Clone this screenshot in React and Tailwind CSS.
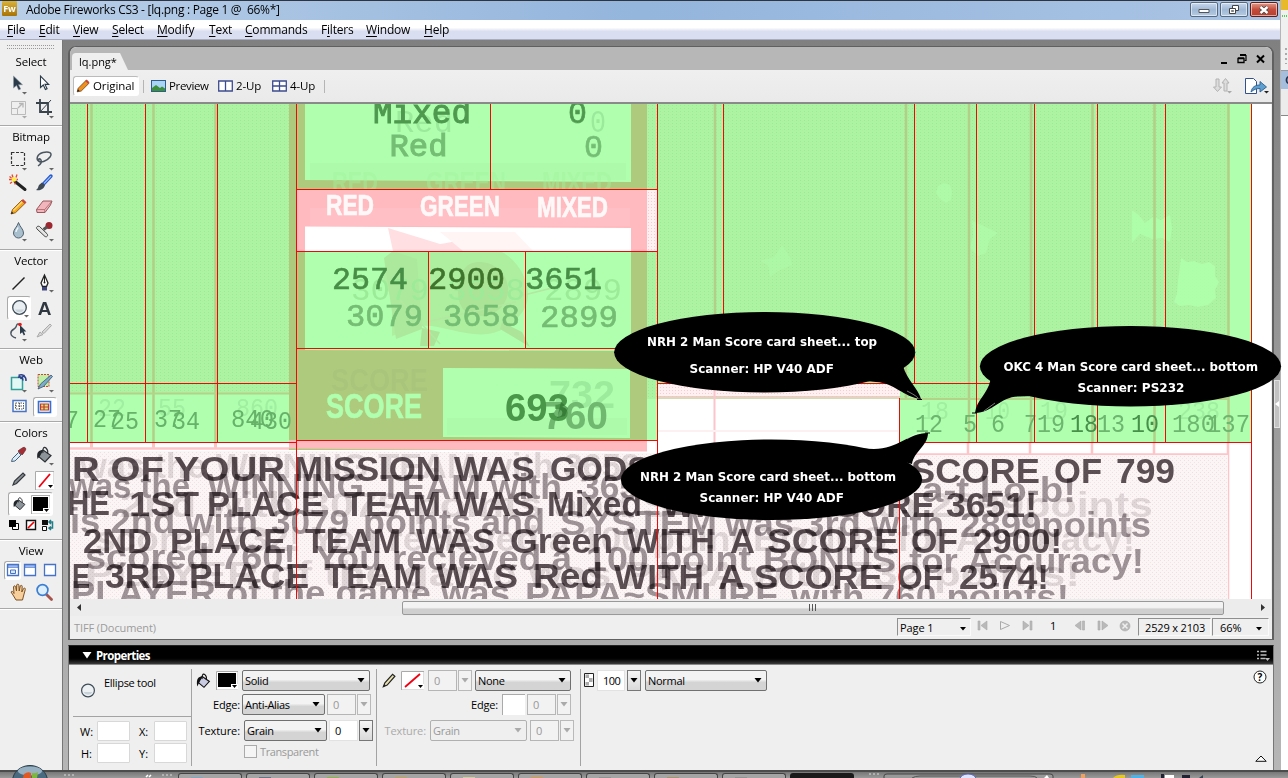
import React from "react";

const UI = "font-['Open_Sans','Noto_Sans',sans-serif]";

/* ---------- small shared pieces ---------- */

function Svg({ w = 18, h = 18, children, className = "" }) {
  return (
    <svg width={w} height={h} viewBox={`0 0 ${w} ${h}`} className={"block shrink-0 " + className} fill="none">
      {children}
    </svg>
  );
}

const Caret = ({ x = 14, y = 16, c = "#666" }) => <path d={`M${x} ${y}h5l-2.5 2.6z`} fill={c} />;

/* ---------- tool icons (22 x 22) ---------- */

const icons = {
  pointer: (
    <Svg w={22} h={22}>
      <path d="M5.500 2v12l3-2.600 2.200 4.600 2-1-2.200-4.300h4z" fill="#2b3a48" stroke="#8b98a4" strokeWidth=".6" />
      <Caret x={14} y={18} />
    </Svg>
  ),
  subselect: (
    <Svg w={22} h={22}>
      <path d="M6.500 2v11.500l2.800-2.500 2.100 4.500 1.700-.8-2.100-4.300h3.700z" fill="#fff" stroke="#2b3a48" strokeWidth="1.100" />
    </Svg>
  ),
  scale: (
    <Svg w={22} h={22}>
      <path d="M3.500 3.500h14v13h-14z M3.500 10.500h6v6" stroke="#bbb" />
      <path d="M10 10l4-4M11 5.500h4v4" stroke="#b5b5b5" strokeWidth="1.300" />
      <Caret x={14} y={18} c="#aaa" />
    </Svg>
  ),
  crop: (
    <Svg w={22} h={22}>
      <path d="M6 1v13h12M2 5h12v12" stroke="#39434c" strokeWidth="1.800" />
      <path d="M6 14L17 2" stroke="#39434c" />
      <Caret x={15} y={18} />
    </Svg>
  ),
  marquee: (
    <Svg w={22} h={22}>
      <path d="M3.500 3.500h13v13h-13z" stroke="#333" strokeWidth="1.200" strokeDasharray="3 1.500" />
      <Caret x={14} y={19} />
    </Svg>
  ),
  lasso: (
    <Svg w={22} h={22}>
      <path d="M6 13C1 11 3 5 9 3.500S19 4 16 8s-9 6-11 4 1-3 2-1 0 4-3 6" stroke="#4a5560" strokeWidth="1.500" />
      <Caret x={15} y={19} />
    </Svg>
  ),
  wand: (
    <Svg w={22} h={22}>
      <path d="M7 8.500l10 8" stroke="#222" strokeWidth="3" strokeLinecap="round" />
      <path d="M1 6.500h3M4 1.500l1 3M9 1.500L8 4.500M2 10.500l2-1.500M7 11.500v-2M1.500 3.500l2 1.500M10 6.500H8.500" stroke="#e8462a" strokeWidth="1.300" />
      <circle cx="6" cy="6.500" r="2.300" fill="#ffec3d" />
    </Svg>
  ),
  brush: (
    <Svg w={22} h={22}>
      <path d="M9 11.500L17 3" stroke="#2657c8" strokeWidth="3.400" strokeLinecap="round" />
      <path d="M10 10.500L17 3.200" stroke="#9cc0ff" strokeWidth="1.200" />
      <path d="M8 9.500l3 3-1.500 2.500C7 17.500 4 17.500 2 17c2-1 2-3 3-5z" fill="#3f4a55" />
    </Svg>
  ),
  pencil: (
    <Svg w={22} h={22}>
      <path d="M3 17l1.500-4.500L14 3l3.200 3.200-9.700 9.500z" fill="#f4a81c" stroke="#7a4a12" strokeWidth=".8" />
      <path d="M5.500 13.500L15 4" stroke="#ffd97c" strokeWidth="1.200" />
      <path d="M13.300 3.700L15 2l3.500 3.300-1.700 1.700z" fill="#c5483a" />
      <path d="M3 17l.8-2.400 1.700 1.600z" fill="#222" />
    </Svg>
  ),
  eraser: (
    <Svg w={22} h={22}>
      <path d="M2.500 12.500L9 4h9l-1.500 4-5.500 7.500H3z" fill="#f2b5bb" stroke="#8d4a50" strokeWidth=".9" />
      <path d="M2.500 12.500h8.200L18 4M10.700 12.500v3" stroke="#a8646a" strokeWidth=".8" />
    </Svg>
  ),
  drop: (
    <Svg w={22} h={22}>
      <path d="M10.500 1.500c1 4 5 6.500 5 10.500a5 5 0 0 1-10 0c0-4 4-6.500 5-10.500z" fill="#a9bfce" stroke="#4f606e" />
      <path d="M8 11c0-2 1.500-3 2-4.500" stroke="#eef6fb" strokeWidth="1.500" />
      <Caret x={14} y={18} />
    </Svg>
  ),
  stamp: (
    <Svg w={22} h={22}>
      <circle cx="15" cy="4.500" r="3.500" fill="#9c2730" />
      <path d="M9.500 8.500l3.500-2.500" stroke="#555" strokeWidth="3" />
      <path d="M3 8l8 7.500c2 1 3.500-1 2-2.800L5.500 5.500C3.500 4.500 1.500 6.500 3 8z" fill="#e4e4e4" stroke="#444" strokeWidth="1" />
      <Caret x={15} y={18} />
    </Svg>
  ),
  line: (
    <Svg w={22} h={22}>
      <path d="M4.500 16.500L16.500 4.500" stroke="#222" strokeWidth="1.500" />
    </Svg>
  ),
  pen: (
    <Svg w={22} h={22}>
      <path d="M10.500 2L7 10l1.500 3.500h4L14 10z" fill="#fff" stroke="#222" strokeWidth="1.300" />
      <path d="M10.500 2v7" stroke="#222" />
      <circle cx="10.500" cy="9.500" r="1" fill="#222" />
      <path d="M8 14h5v3.500H8z" fill="#3f467c" />
      <Caret x={15} y={17} />
    </Svg>
  ),
  ellipse: (
    <Svg w={22} h={22}>
      <circle cx="11.500" cy="10.500" r="6.800" fill="#e8eef2" stroke="#3f4d58" strokeWidth="1.300" />
      <path d="M7 12.500a5 5 0 0 0 9 0z" fill="#c9d3da" />
      <Caret x={16} y={18} />
    </Svg>
  ),
  freeform: (
    <Svg w={22} h={22}>
      <path d="M8 17C1 15 2 10 6 8S7 1.500 12 3.500" stroke="#4a5560" strokeWidth="1.400" />
      <path d="M12 4v9l2.200-1.800 1.600 3.200 1.400-.8-1.500-3h2.700z" fill="#2b3a48" />
      <circle cx="12" cy="3.500" r="1.800" fill="#e02020" />
      <Caret x={14} y={18} />
    </Svg>
  ),
  knife: (
    <Svg w={22} h={22}>
      <path d="M3 16l3-5 3 2.500zM8 11L16 3l1.500 1.500L10 12.500z" fill="#d8d8d8" stroke="#aaa" />
    </Svg>
  ),
  hotspot: (
    <Svg w={22} h={22}>
      <path d="M3.500 5.500h11v12h-11z" fill="#e2f8f4" stroke="#2ea19a" strokeWidth="1.500" />
      <path d="M10.500 3.500c4-2 8 1 7.500 5.500M12.500 7l4-4M10 5.500c2-1.500 5 0 5 3" stroke="#2c3f8a" strokeWidth="1.500" />
      <Caret x={14} y={18} />
    </Svg>
  ),
  slice: (
    <Svg w={22} h={22}>
      <path d="M4 2.500h11v12H4z" fill="#bff0a5" stroke="#cc4438" strokeDasharray="2 1" />
      <path d="M4 17l2.500-5L17 3l1.500 1.500-9 10z" fill="#7fa9c9" stroke="#33566f" strokeWidth=".8" />
      <Caret x={15} y={18} />
    </Svg>
  ),
  hideSlice: (
    <Svg w={22} h={22}>
      <path d="M5 4.500h13v11H5z" fill="#fff" stroke="#4a74c4" strokeWidth="1.500" />
      <path d="M7.500 7h8v6h-8zM7.500 10h8M11.500 7v6" stroke="#555" strokeDasharray="1.500 1" />
    </Svg>
  ),
  showSlice: (
    <Svg w={22} h={22}>
      <path d="M4.500 5.500h12v11h-12z" fill="#fff" stroke="#3570d4" strokeWidth="1.600" />
      <path d="M6.500 8h8v6h-8z" fill="#c5e88d" stroke="#d33220" strokeWidth="1.200" />
      <path d="M6.500 11h8M10 8v6" stroke="#d33220" strokeWidth="1.200" />
    </Svg>
  ),
  dropper: (
    <Svg w={22} h={22}>
      <path d="M3.500 16.500l1-3 6-6 2.500 2.500-6 6z" fill="#d9ecf8" stroke="#45637c" />
      <path d="M10 6l1.500-1.300L15 2.500c2-.8 3.500 1 2.500 2.800L15 9l-1 1z" fill="#a42e34" stroke="#5e2227" strokeWidth=".6" />
    </Svg>
  ),
  bucket: (
    <Svg w={22} h={22}>
      <path d="M9 5l8 5.500-6 6.500-6.500-5.500z" fill="#8e959a" stroke="#2c3135" strokeWidth="1.200" />
      <path d="M9 8c-1-4 1-7 3-5s2 4 1.500 5.500" stroke="#2c3135" strokeWidth="1.200" />
      <path d="M9 5c-4 0-7 2-5.500 9l2.500-3z" fill="#22272b" />
      <Caret x={15} y={18} />
    </Svg>
  ),
  smallPencil: (
    <Svg w={22} h={22}>
      <path d="M5 16l1.500-4L15 4l2 2-8.500 8.500z" fill="#8b9096" stroke="#33383d" strokeWidth="1.200" />
    </Svg>
  ),
  hand: (
    <Svg w={22} h={22}>
      <path d="M8 19L5 14l-2-3c1-1.500 2-.5 3 1.500L5.500 6c.5-1.800 2-1.500 2.200.3L8.500 10l.2-6c.8-1.500 2-1 2.200.3L11.200 10l1-5c1-1.300 2.200-.6 2 .8L13.800 11l1.800-3.500c1-.9 2-.2 1.700 1L15.500 15l-1 4z" fill="#f7cf9c" stroke="#7c5124" />
    </Svg>
  ),
  zoom: (
    <Svg w={22} h={22}>
      <path d="M12.500 13.500l5 5" stroke="#a6544b" strokeWidth="2.800" strokeLinecap="round" />
      <circle cx="8.500" cy="9" r="5.400" fill="#dcefff" stroke="#3c7ed1" strokeWidth="1.700" />
    </Svg>
  ),
};

function ScreenIcon({ kind }) {
  return (
    <Svg w={18} h={18}>
      <path d="M3.500 3.500h11v11h-11z" fill="#fff" stroke="#4672c8" strokeWidth="1.300" />
      {kind !== "full" && <path d="M4 4h10v2.500H4z" fill="#9db9ee" stroke="#4672c8" strokeWidth=".6" />}
      {kind === "std" && <path d="M6.500 9h5v3.500h-5z" fill="#dbe6fb" stroke="#4672c8" />}
    </Svg>
  );
}

function Swatch({ color, none, w = 19 }) {
  return (
    <Svg w={w} h={19}>
      <path d={`M0 0h${w}v19H0z`} fill="#fff" />
      <path d={`M.5 19V.5H${w}`} stroke="#aaa" />
      <path d={`M${w - 0.5} 1v17.500H1`} stroke="#ddd" />
      {none ? <path d={`M4 16L${w - 4} 3`} stroke="#f00010" strokeWidth="1.800" /> : <path d={`M2 2h${w - 4}v14H2z`} fill={color} />}
      <path d={`M${w - 7} 13h7v5h-7z`} fill="#fff" />
      <path d={`M${w - 6} 14h5l-2.500 3z`} fill="#000" />
    </Svg>
  );
}

/* ---------- left tool palette ---------- */

function Section({ title, className, children }) {
  return (
    <div className={"flex flex-col border-b border-[#a9a9a9] shadow-[0_1px_0_#fff] " + className}>
      <div className="flex h-[22px] shrink-0 items-center justify-center text-[11.5px] leading-none tracking-[-0.15px] text-black">{title}</div>
      {children}
    </div>
  );
}

const Row = ({ a, b, h = "h-6" }) => (
  <div className={"flex shrink-0 items-center gap-[3px] pl-[7px] " + h}>
    <div className="flex w-[23px] justify-center">{a}</div>
    <div className="flex w-[23px] justify-center">{b}</div>
  </div>
);

const Sel = ({ children }) => <div className="rounded-[3px] border border-[#aaa] border-r-white border-b-white bg-white">{children}</div>;

function Tools() {
  return (
    <div className="flex w-[63px] shrink-0 flex-col border-r border-[#777] bg-[#efefef]">
      <div className="flex h-[11px] shrink-0 items-end pl-[7px]">
        <Svg w={48} h={6}>
          <path d="M0 .5h48M0 3.500h48" stroke="#999" strokeDasharray="1 1" />
        </Svg>
      </div>
      <Section title="Select" className="h-[75px]">
        <Row a={icons.pointer} b={icons.subselect} />
        <Row a={icons.scale} b={icons.crop} />
      </Section>
      <Section title="Bitmap" className="h-[124px]">
        <Row a={icons.marquee} b={icons.lasso} />
        <Row a={icons.wand} b={icons.brush} />
        <Row a={icons.pencil} b={icons.eraser} />
        <Row a={icons.drop} b={icons.stamp} />
      </Section>
      <Section title="Vector" className="h-[99px]">
        <Row a={icons.line} b={icons.pen} />
        <Row a={<Sel>{icons.ellipse}</Sel>} b={<span className="font-['Liberation_Sans',sans-serif] text-[19px] leading-none font-bold text-[#2f3840]">A</span>} />
        <Row a={icons.freeform} b={icons.knife} />
      </Section>
      <Section title="Web" className="h-[73px]">
        <Row a={icons.hotspot} b={icons.slice} />
        <Row a={icons.hideSlice} b={<Sel><div className="-my-0.5">{icons.showSlice}</div></Sel>} />
      </Section>
      <Section title="Colors" className="h-[118px]">
        <Row a={icons.dropper} b={icons.bucket} />
        <Row a={icons.smallPencil} b={<Swatch none />} />
        <div className="flex h-6 shrink-0 items-center pl-2">
          <div className="flex h-6 w-[45px] items-center rounded-[3px] border border-[#aaa] border-r-white border-b-white bg-white">
            <svg width="22" height="18" viewBox="0 0 22 22">
              <path d="M9 6l8 5.500-6 6.500-6.500-5.500z" fill="#8e959a" stroke="#2c3135" strokeWidth="1.200" />
              <path d="M9 9c-1-4 1-7 3-5s2 4 1.500 5.500" stroke="#2c3135" strokeWidth="1.200" fill="none" />
              <path d="M9 6c-4 0-7 2-5.500 9l2.500-3z" fill="#22272b" />
            </svg>
            <Swatch color="#000" />
          </div>
        </div>
        <div className="flex h-[17px] shrink-0 items-center gap-[5px] pl-2">
          <Svg w={12} h={12}>
            <path d="M4.500 4.500h6v6h-6z" fill="#fff" stroke="#000" />
            <path d="M1 1h7v7H1z" fill="#000" />
          </Svg>
          <Svg w={12} h={12}>
            <path d="M1.500 1.500h9v9h-9z" fill="#fff" stroke="#111" strokeWidth="1.400" />
            <path d="M3 9l6-6" stroke="#e00" strokeWidth="1.700" />
          </Svg>
          <Svg w={13} h={12}>
            <path d="M0 1h6v5H0z" fill="#111" />
            <path d="M.5 7.500h4v4h-4z" fill="#fff" stroke="#111" />
            <path d="M7.500 3h3v6H8M9 1L7 3l2 2M9 7.500L7 9l2 2" stroke="#227d86" strokeWidth="1.500" />
          </Svg>
        </div>
      </Section>
      <Section title="View" className="h-[69px]">
        <div className="flex h-4 shrink-0 items-center pl-1">
          <div className="-my-0.5 flex h-[19px] w-[17px] items-center justify-center rounded-[3px] border border-[#aaa] border-r-white border-b-white bg-white">
            <ScreenIcon kind="std" />
          </div>
          <ScreenIcon kind="menu" />
          <div className="pl-0.5">
            <ScreenIcon kind="full" />
          </div>
        </div>
        <Row a={icons.hand} b={icons.zoom} h="h-7" />
      </Section>
    </div>
  );
}

/* ---------- title and menu bars ---------- */

function WinButton({ red, children }) {
  return (
    <div
      className={
        "flex h-[15px] w-7 items-center justify-center rounded-[2px] border shadow-[inset_0_0_0_1px_rgba(255,255,255,.55)] " +
        (red ? "border-[#5a1f1c] bg-linear-to-b from-[#dd9a8c] via-[#c34c3c] to-[#b8402c]" : "border-[#56697f] bg-linear-to-b from-[#c9d9ec] via-[#a0b8d5] to-[#b4cae4]")
      }
    >
      {children}
    </div>
  );
}

function TitleBar() {
  return (
    <div className="flex h-5 shrink-0 items-start border-t border-[#2e3440] bg-linear-to-r from-[#b9cfe8] via-[#94b5dc] to-[#aac4e4] pl-[2px]">
      <div className="flex h-[15px] w-[15px] items-center justify-center rounded-[1px] bg-linear-to-b from-[#d9b23a] to-[#a87400] text-[9px] leading-none font-bold text-white">Fw</div>
      <div className="pt-[2px] pl-[9px] text-[12px] leading-[14px] tracking-[-0.29px] whitespace-pre text-black">Adobe Fireworks CS3 - [lq.png : Page 1 @  66%*]</div>
      <div className="ml-auto flex gap-[2px] pt-px pr-[2px]">
        <WinButton>
          <Svg w={12} h={8}><path d="M1 3.500h10v3H1z" fill="#fff" stroke="#555" /></Svg>
        </WinButton>
        <WinButton>
          <Svg w={12} h={11}>
            <path d="M4.500 1.500h6v5h-6z" fill="#fff" stroke="#444" />
            <path d="M1.500 4.500h6v5h-6z" fill="#fff" stroke="#444" />
            <path d="M3.500 6.500h2v1h-2z" fill="#9ab" stroke="#444" strokeWidth=".6" />
          </Svg>
        </WinButton>
        <WinButton red>
          <Svg w={12} h={10}>
            <path d="M2.500 2l7 6M9.500 2l-7 6" stroke="#444" strokeWidth="4" />
            <path d="M2.500 2l7 6M9.500 2l-7 6" stroke="#fff" strokeWidth="2.400" />
          </Svg>
        </WinButton>
      </div>
    </div>
  );
}

const menus = [
  ["File", 0, "w-[32px]"],
  ["Edit", 0, "w-[34px]"],
  ["View", 0, "w-[39px]"],
  ["Select", 0, "w-[45px]"],
  ["Modify", 0, "w-[52px]"],
  ["Text", 0, "w-[36px]"],
  ["Commands", 0, "w-[76px]"],
  ["Filters", 1, "w-[45px]"],
  ["Window", 0, "w-[58px]"],
  ["Help", 0, "w-[40px]"],
];

function MenuBar() {
  return (
    <div className="flex h-5 shrink-0 items-center border-b border-[#a8aec0] bg-linear-to-b from-white from-40% to-[#d9def0] to-60% pl-[7px] text-[12px] leading-none tracking-[-0.2px] text-black">
      {menus.map(([m, i, w]) => (
        <div key={m} className={"shrink-0 pt-px " + w}>
          {m.slice(0, i)}
          <span className="underline underline-offset-2">{m[i]}</span>
          {m.slice(i + 1)}
        </div>
      ))}
    </div>
  );
}

/* ---------- document window ---------- */

function DocTabs() {
  return (
    <div className="flex h-[23px] shrink-0 items-end rounded-t-[7px] bg-[#b7b7b7] pl-[2px]">
      <div className="flex h-[17px] w-[56px] items-center rounded-tl-[4px] bg-[#efefef] pl-[7px] text-[11px] leading-none text-black [clip-path:polygon(0_0,48px_0,100%_100%,0_100%)]">lq.png*</div>
      <div className="ml-auto flex gap-[9px] self-center pr-[7px]">
        <Svg w={8} h={12}><path d="M1 9h6v2H1z" fill="#000" /></Svg>
        <Svg w={10} h={12}>
          <path d="M3 2.500h6v5H7.500M3 1.500h6" stroke="#000" strokeWidth="1.200" />
          <path d="M1 5.500h6v4H1zM1 5h6" stroke="#000" strokeWidth="1.300" />
        </Svg>
        <Svg w={9} h={12}><path d="M1 2.500l7 7M8 2.500l-7 7" stroke="#000" strokeWidth="2" /></Svg>
      </div>
    </div>
  );
}

const Sep = ({ className = "" }) => <div className={"h-[13px] w-px bg-[#b5b5b5] " + className} />;

function DocToolbar() {
  return (
    <div className="flex h-[32px] shrink-0 items-center bg-linear-to-b from-[#efefef] to-[#eaeaea] pl-[3px] text-[11.500px] leading-none text-black">
      <div className="flex h-5 w-[66px] items-center rounded-[3px] border border-[#bbb] border-r-white border-b-white bg-white pl-[1px]">
        <svg width="16" height="16" viewBox="0 0 22 22">
          <path d="M3 19l1.500-5L15 3.500l4 4L8.500 18z" fill="#ef8f1c" stroke="#5d3312" />
          <path d="M14 4l2-2 4 4-2 2z" fill="#c5483a" />
          <path d="M3 19l1-3.500 2.500 2.500z" fill="#222" />
        </svg>
        <span className="pl-[2px] tracking-[-0.1px]">Original</span>
      </div>
      <Sep className="mr-[7px] ml-[4px]" />
      <Svg w={15} h={12}>
        <path d="M0 0h15v12H0z" fill="#2e5f8c" />
        <path d="M1 1h13v10H1z" fill="#a9d4f4" />
        <path d="M1 8l4-3 4 3 2-1.500 3 2V11H1z" fill="#3d8f3a" />
      </Svg>
      <span className="w-[52px] pl-[3px] tracking-[-0.35px]">Preview</span>
      <Svg w={15} h={12}>
        <path d="M.7 1h13.600v10H.7zM7.500 1v10" fill="#fff" stroke="#3d4c8f" strokeWidth="1.300" />
      </Svg>
      <span className="w-[39px] pl-[3px] tracking-[-0.1px]">2-Up</span>
      <Svg w={15} h={12}>
        <path d="M.7 1h13.600v10H.7zM7.500 1v10M1 6h13" fill="#fff" stroke="#3d4c8f" strokeWidth="1.300" />
      </Svg>
      <span className="w-[37px] pl-[3px] tracking-[-0.1px]">4-Up</span>
      <Sep />
      <Svg w={21} h={18} className="ml-auto">
        <path d="M5 2h3v8h2.500l-4 4.500-4-4.500H5zM13 14h3V6h2l-3.500-4.500L11 6h2z" fill="#ddd" stroke="#b2b2b2" />
        <Caret x={16} y={14} c="#aaa" />
      </Svg>
      <Svg w={25} h={18} className="mr-[3px] ml-[12px]">
        <path d="M1.500 1.500h8l3 3v12h-11z" fill="#fff" stroke="#33518c" />
        <path d="M7 15c1-5 4-7 9-7V4.500l6.500 5.500-6.500 5v-3.500c-4 0-6 1-9 3.500z" fill="#5e9fd1" stroke="#2d5e8b" strokeWidth=".9" />
        <Caret x={20} y={14} c="#222" />
      </Svg>
    </div>
  );
}

const MONO = "'Liberation Mono', monospace";
const SANS = "'Liberation Sans', sans-serif";

/* [text, x, baseline, width] */
const darkWords = [
  ["R OF YOUR", 72, 480.7, 213], ["MISSION", 294, 480.7, 147], ["WAS", 454, 480.7, 81], ["GODS", 550, 481, 100],
  ["SCORE", 911, 482.500, 129], ["OF", 1054, 482.500, 48], ["799", 1116, 483, 59],
  ["HE", 67, 515, 43], ["1ST", 129, 515.500, 70], ["PLACE", 207, 515.700, 117], ["TEAM", 344, 516, 97], ["WAS", 454, 516, 81],
  ["Mixed", 547, 516.300, 95], ["WITH", 662, 516.500, 90], ["SCORE", 810, 516.700, 125], ["3651!", 946, 516.700, 91],
  ["2ND", 83, 552.700, 69], ["PLACE", 170, 552.700, 116], ["TEAM", 305, 552.700, 96], ["WAS", 416, 552.700, 79],
  ["Green", 510, 553, 103], ["WITH", 627, 553, 88], ["A", 730, 553, 25], ["SCORE", 767, 553.200, 132], ["OF", 911, 553.200, 47], ["2900!", 973, 553.300, 89],
  ["E", 72, 587.700, 18], ["3RD", 105, 587.700, 71], ["PLACE", 189, 587.700, 120], ["TEAM", 325, 588, 97], ["WAS", 436, 588, 82],
  ["Red", 533, 588.300, 70], ["WITH", 614, 588.500, 90], ["A", 718, 588.700, 27], ["SCORE", 754, 588.900, 129], ["OF", 897, 589, 46], ["2574!", 959, 589, 90],
];

const grayWords = [
  ["was the", 69, 497.500, 121], ["WINNING", 207, 498, 157], ["TEAM with", 380, 498.500, 182], ["3651 p", 580, 499, 110], ["a-t l-o-b!", 922, 501.700, 154],
  ["is 2nd with", 70, 532.500, 188], ["3079", 271, 533.500, 78], ["points and", 363, 534, 182], ["SYSTEM", 560, 535, 157], ["was 3rd with", 725, 536, 219], ["2899points", 960, 537, 191],
  ["scored 760!", 85, 569, 211], ["You recieved a", 315, 570, 257], ["100 point", 586, 571, 165], ["BONUS", 763, 571.800, 133], ["for Accuracy!", 909, 572.700, 235],
  ["PLAYER of the game was", 71, 605, 439], ["PAPA~SMURF", 525, 607, 253], ["with 760 points!", 791, 608.500, 278],
];

const ghostWords = [
  ["was the WINNING TEAM with 3658", 80, 478, 560], ["2nd with 3079 points and SYSTEM with 2899points", 120, 517, 1033],
  ["scored 732! You recieved a 100 point BONUS for Accuracy!", 95, 551, 1040], ["PLAYER of the game was PAPA with 732 points!", 85, 586, 995],
];

function Words({ list, fill, opacity = 1 }) {
  return (
    <g fill={fill} opacity={opacity} fontFamily={SANS} fontWeight="700" fontSize="35" className="mix-blend-multiply">
      {list.map(([t, x, y, w], i) => (
        <text key={i} x={x} y={y} textLength={w} lengthAdjust="spacingAndGlyphs">{t}</text>
      ))}
    </g>
  );
}

function Nums({ list, size, fill, family = MONO, weight = 400, edge = 0 }) {
  return (
    <g fill={fill} fontFamily={family} fontSize={size} fontWeight={weight} stroke={edge ? fill : "none"} strokeWidth={edge}>
      {list.map(([t, x, y, w], i) => (
        <text key={i} x={x} y={y} textLength={w} lengthAdjust="spacingAndGlyphs">{t}</text>
      ))}
    </g>
  );
}

function ScoreCard() {
  return (
    <svg width="1201" height="495" viewBox="70 104 1201 495" className="block shrink-0">
      <defs>
        <pattern id="grain" width="4" height="3" patternUnits="userSpaceOnUse">
          <rect width="4" height="3" fill="#acf3a2" />
          <rect x="0" y="0" width="1" height="1" fill="#a2e697" />
          <rect x="2" y="1" width="1" height="1" fill="#b0ee9f" />
        </pattern>
        <pattern id="rose" width="4" height="4" patternUnits="userSpaceOnUse">
          <rect width="4" height="4" fill="#fcf5f6" />
          <rect width="1" height="1" fill="#f0dfe1" />
          <rect x="2" y="2" width="1" height="1" fill="#f2e4e6" />
        </pattern>
        <pattern id="rose2" width="3" height="3" patternUnits="userSpaceOnUse">
          <rect width="3" height="3" fill="#fff0f1" />
          <rect width="1" height="1" fill="#ffc8cc" />
        </pattern>
      </defs>
      <path d="M70 103h1201v496H70z" fill="#fff" />

      {/* tinted capture areas */}
      <path d="M70 103h1159v296H70z" fill="url(#grain)" />
      <path d="M1229 103h23v296h-23z" fill="#afffaf" />
      <path d="M70 394h219v48H70z" fill="#afffaf" />
      <path d="M900 399h352v43H900z" fill="#afffaf" />
      <g fill="#afffab">
        <path d="M1132 210l7 5 6 8 8-6 8 3 9-5 2 13-2 14-8-4-10 1-12-5-8 9z" opacity=".8" />
        <path d="M1181 258l6 4 7-1 8 3 7-2 6 4 0 10 4 6-4 8 1 8-8 7-10 2-9-2-9 1-6-4 3-9 1-12z" opacity=".85" />
        <path d="M938 186l6-3 6 2 2 7-1 8-5 3-6-4-4-6z" opacity=".6" />
        <path d="M972 221l12 5 14 7-8 6-4 14-8 3-8-8 3-13z" opacity=".6" />
        <path d="M760 261l14-4 8-12 8 12 2 8-14 6-8 6-2-12z" opacity=".45" />
      </g>

      {/* printed column rules */}
      <path
        d="M91.500 103v344M153.500 103v344M215.500 103v344M715 103v281M906 103v296M969 103v340M1031 103v340M1092.500 103v340M1154.500 103v340M1228.500 103v340"
        stroke="#b1cf86" strokeWidth="2.500"
      />
      <path d="M70 393.500h219M900 399h328" stroke="#b3d389" strokeWidth="2" />
      <path d="M70 448.500h219M904 454.500h324M968 443v12M1030 443v12M1092 443v12M1154 443v12M1228 443v156M91.500 443v5M153.500 443v5M215.500 443v5" stroke="#ffc4c8" strokeWidth="2.500" />

      {/* blank block */}
      <path d="M658 384h242v12H658z" fill="url(#rose2)" />
      <path d="M647 399h11v53h-11zM658 399h242v56H658z" fill="#fff" />
      <path d="M647 399h10v41h-10z" fill="#afffaf" />
      <path d="M658 397.500h242M714.500 384v66" stroke="#fbc6cb" strokeWidth="2" />
      <path d="M658 431h240" stroke="#fdf0f1" strokeWidth="2" />

      {/* team panel */}
      <path d="M289 103h358v347H289z" fill="#aecb7d" />
      <path d="M305 103h326v79l-326-2z" fill="#afffaf" />
      <path d="M310 163h316v17H310z" fill="#acfaaa" />
      <path d="M296 190h351v61H296z" fill="#ffbabf" />
      <path d="M647 190h10v61h-10z" fill="url(#rose2)" />
      <path d="M310 208h320v18H310z" fill="#fff" opacity=".08" />
      <path d="M305 226.500l326 1.500v23H305z" fill="#fff" />
      <path d="M388 228l52 16c20-2 40-14 60-3l9 10H393z" fill="#ffdfe2" />
      <path d="M440 232h75l18 19h-70z" fill="#fff5f5" />
      <path d="M305 251h326v100l-326-1z" fill="#afffaf" />
      <path d="M393 251h107c20 10 28 30 28 45s-18 35-40 38-50-10-66-8-18 6-30 10V300l-9-22z" fill="#aeef9f" />
      <path d="M384 258l9-7 24 8 5 70-26 10z" fill="#ace99d" />
      <path d="M470 264c20-8 40 10 38 28s-20 28-38 22-14-44 0-50z" fill="#abe497" />
      <path d="M502 322l20 10 8 15-30-18zM422 328l18 4-6 14h-14z" fill="#ace59a" />
      <path d="M520 296l32-8M426 322l90-20M400 300l40 44" stroke="#b2e8a0" strokeWidth="1.500" />
      <path d="M289 440h358v11.500l-358-3z" fill="#ffbabf" />
      <path d="M443 368l187 1v69l-187-1z" fill="#afffaf" />
      <path d="M447 418h180v17H447z" fill="#acfaaa" />

      {/* narrative text area */}
      <path d="M70 451l219 0 358 2 257 2h324v144H70z" fill="url(#rose)" />
      <Words list={ghostWords} fill="#b9b2b5" opacity={0.42} />
      <Words list={grayWords} fill="#9b9497" opacity={0.95} />
      <Words list={darkWords} fill="#544a4e" opacity={0.95} />

      {/* panel lettering */}
      <Nums size={31} fill="#9bea9b" list={[["Red", 395, 132, 58], ["0", 590, 132, 16]]} />
      <Nums size={32.500} fill="#4e994e" edge={1} list={[["Mixed", 373, 122.600, 98]]} />
      <Nums size={31} fill="#74be74" edge={1} list={[["Red", 389.500, 156, 58]]} />
      <Nums size={31} fill="#4e994e" edge={0.6} list={[["0", 568, 122.600, 19]]} />
      <Nums size={31} fill="#74be74" edge={0.6} list={[["0", 584, 157, 19]]} />
      <g opacity=".4">
        <Nums size={29} family={SANS} weight={700} fill="#a4f3a0" list={[["RED", 332, 192, 46], ["GREEN", 426, 192, 80], ["MIXED", 542, 192, 70]]} />
      </g>
      <path d="M297 190h350v5H297z" fill="#ffbabf" />
      <Nums size={29} family={SANS} weight={700} fill="#fff8f8" edge={0.7} list={[["RED", 326, 215, 48], ["GREEN", 420, 216, 80], ["MIXED", 537, 217, 71]]} />
      <Nums size={32} fill="#9beb98" list={[["3079", 351, 300, 78], ["3658", 447, 300, 78], ["2899", 544, 300, 78]]} />
      <Nums size={31} fill="#488e46" edge={0.6} list={[["2574", 332, 289, 76], ["3651", 525, 289, 77]]} />
      <Nums size={31} fill="#3f742c" edge={0.6} list={[["2900", 428, 289, 77]]} />
      <Nums size={31} fill="#74bd73" edge={0.6} list={[["3079", 346, 325.500, 77], ["3658", 443, 325.500, 77], ["2899", 540, 326.500, 78]]} />
      <Nums size={31} family={SANS} weight={700} fill="#a9c57b" list={[["SCORE", 331, 391, 97]]} />
      <Nums size={35} family={SANS} weight={700} fill="#afffaf" edge={0.6} list={[["SCORE", 326, 417.500, 96]]} />
      <Nums size={38} family={SANS} weight={700} fill="#9ceb9c" list={[["732", 549, 407.500, 66]]} />
      <Nums size={38} family={SANS} weight={700} fill="#70b770" list={[["760", 543, 428.500, 65]]} />
      <Nums size={38} family={SANS} weight={700} fill="#4a974a" list={[["693", 505, 420.800, 64]]} />
      <path d="M561 402l7 6-3 8-8 2z" fill="#2c6a2c" opacity=".6" />

      {/* stroke results */}
      <Nums size={26} fill="#a0ee9f" list={[["22", 98, 416, 28], ["55", 158, 416, 28], ["860", 236, 416, 42], ["18", 921, 419, 28], ["10", 985, 419, 25], ["19", 1040, 419, 28], ["238", 1178, 419, 42]]} />
      <Nums size={26} fill="#66b268" list={[["7", 65, 428, 14], ["27", 93, 426.500, 28], ["25", 111, 429, 28], ["37", 154, 426.500, 28], ["34", 172, 429, 28], ["840", 231, 427, 43], ["430", 250, 429, 42]]} />
      <Nums size={26} fill="#6cb66e" list={[["12", 915, 431.700, 28], ["5", 963, 431.700, 14], ["6", 991, 431.700, 14], ["7", 1024, 431.700, 13], ["19", 1037, 431.700, 28], ["13", 1097, 431.700, 28], ["180", 1172, 431.700, 43], ["137", 1207, 431.700, 43]]} />
      <Nums size={26} fill="#46904a" list={[["18", 1070, 431.700, 28], ["10", 1131, 431.700, 28]]} />

      {/* slice guides */}
      <g fill="none" stroke="#f00808" strokeWidth="1" shapeRendering="crispEdges">
        <path d="M87.500 103v339M145.500 103v339M217.500 103v339M296.500 103v496M490.500 103v86M657.500 103v496M723.500 103v280M914.500 103v280M976.500 103v339M1034.500 103v339M1097.500 103v339M1165.500 103v339M1251.500 103v496M899.500 398v201M428.500 251v97M525.500 251v97" />
        <path d="M296 189.500h361M296 251.500h361M296 348.500h361M70 383.500h226M657 383.500h594M70 442.500h226M296 440.500h361M900 442.500h351" />
      </g>
    </svg>
  );
}

function Bubbles() {
  const f = { fill: "#fff", fontFamily: "'DejaVu Sans', sans-serif", fontWeight: 700, fontSize: 12.3 };
  const lines = [
    ["NRH 2 Man Score card sheet... top", 647, 346, 230],
    ["Scanner: HP V40 ADF", 689.500, 373, 144.500],
    ["OKC 4 Man Score card sheet... bottom", 1003.500, 371, 254.500],
    ["Scanner: PS232", 1077.500, 392, 107],
    ["NRH 2 Man Score card sheet... bottom", 640, 481, 256],
    ["Scanner: HP V40 ADF", 699.500, 502, 144.500],
  ];
  return (
    <svg width="1288" height="778" viewBox="0 0 1288 778" className="pointer-events-none absolute top-0 left-0">
      <ellipse cx="764.700" cy="352.300" rx="150.600" ry="40.300" />
      <path d="M903 366c4 14 15 22 18 33-18-2-26-16-45-17l-30-3z" />
      <ellipse cx="1130.500" cy="366.300" rx="150.600" ry="40.300" />
      <path d="M990.500 380c-3 14-14 20-15.500 33 17 0 25-16 43-16.500l30-1z" />
      <ellipse cx="771.500" cy="479.700" rx="150.600" ry="40.300" />
      <path d="M912 464c2-13 16-18 16-31-20 0-30 16-54 16l-26-1z" />
      <path d="M917 399.500h5M972 413h5M925 433h5" stroke="#000" strokeWidth="1" />
      <path d="M907 391c6 3 9 5 11 7M984 411l11-8M907 439c6-4 10-6 14-6" stroke="#fff" strokeWidth=".6" fill="none" opacity=".8" />
      {lines.map(([t, x, y, w], i) => (
        <text key={i} x={x} y={y} textLength={w} lengthAdjust="spacingAndGlyphs" {...f}>{t}</text>
      ))}
    </svg>
  );
}

function ScrollBar() {
  return (
    <div className="flex h-[17px] shrink-0 items-center bg-[#ececec] pr-[2px]">
      <Svg w={18} h={17}><path d="M11 5v7L7 8.500z" fill="#333" /></Svg>
      <div className="ml-[314px] flex h-[14px] w-[822px] items-center justify-center rounded-[2px] border border-[#999] bg-linear-to-b from-[#f3f3f3] from-45% to-[#cfcfcf] to-60%">
        <Svg w={10} h={8}><path d="M1.500 0v7M4.500 0v7M7.500 0v7" stroke="#555" /></Svg>
      </div>
      <Svg w={14} h={17} className="ml-auto"><path d="M5 5v7l4-3.500z" fill="#333" /></Svg>
    </div>
  );
}

function StatusBox({ w, children }) {
  return <div className={"flex h-[18px] shrink-0 items-center border border-[#8f8f8f] border-r-[#fafafa] border-b-[#fafafa] px-[2px] " + w}>{children}</div>;
}

function StatusBar() {
  const tri = <Svg w={6} h={4} className="mt-1 ml-auto"><path d="M0 0h6L3 3.500z" fill="#000" /></Svg>;
  return (
    <div className="flex h-[22px] shrink-0 items-center bg-[#efefef] pl-[4px] text-[11px] leading-none text-black">
      <span className="text-[11px] tracking-[-0.1px] text-[#9c9c9c]">TIFF (Document)</span>
      <div className="ml-auto flex items-center pr-[3px]">
        <StatusBox w="w-[74px]">
          <span className="tracking-[-0.1px]">Page 1</span>
          <div className="ml-auto pr-[2px]">{tri}</div>
        </StatusBox>
        <svg width="167" height="18" viewBox="971 618 167 18" className="block shrink-0">
          <g fill="#b9b9b9" stroke="#a9a9a9" strokeWidth=".6">
            <path d="M978 621h2v9h-2zM987 621v9l-6-4.500z" />
            <path d="M1000.500 621.500v8l9-4z" fill="none" strokeWidth="1" />
            <path d="M1023 621v9l6-4.500zM1030 621h2v9h-2z" />
            <path d="M1081 621v9l-6-4.500zM1082.500 621h2v9h-2z" />
            <path d="M1098 621h2v9h-2zM1102 621v9l6-4.500z" />
            <circle cx="1125" cy="626" r="5" />
          </g>
          <path d="M1122.500 623.500l5 5M1127.500 623.500l-5 5" stroke="#efefef" strokeWidth="1.500" />
          <text x="1050" y="630" fontSize="11" fontFamily="Open Sans, sans-serif">1</text>
        </svg>
        <StatusBox w="w-[73px]"><span className="pl-[4px] tracking-[-0.15px]">2529 x 2103</span></StatusBox>
        <div className="w-px" />
        <StatusBox w="w-[57px]">
          <span className="pl-[5px]">66%</span>
          <div className="ml-auto pr-[4px]">{tri}</div>
        </StatusBox>
      </div>
    </div>
  );
}

function DocWindow() {
  return (
    <div className="flex h-[594px] w-[1206px] shrink-0 flex-col rounded-t-[8px] border-2 border-t-[1px] border-b-[1px] border-[#606060] bg-[#efefef]">
      <DocTabs />
      <DocToolbar />
      <div className="h-[2px] shrink-0 bg-[#8a8a8a]" />
      <ScoreCard />
      <ScrollBar />
      <StatusBar />
    </div>
  );
}

/* ---------- properties panel ---------- */

function Select({ w, off, children }) {
  return (
    <div
      className={
        "flex h-[21px] shrink-0 items-center rounded-[2px] border pr-[4px] pl-[2px] " +
        (off ? "border-[#b0b0b0] bg-[#efefef] text-[#999] " : "border-[#707070] bg-linear-to-b from-[#f3f3f3] from-45% to-[#d4d4d4] to-60% ") +
        w
      }
    >
      <span className="tracking-[-0.3px]">{children}</span>
      <Svg w={8} h={5} className="ml-auto"><path d="M.5 0h7L4 4.500z" fill={off ? "#aaa" : "#000"} /></Svg>
    </div>
  );
}

const NumBox = ({ on, children = "0", w = "w-[29px]" }) => (
  <div className={"flex h-[21px] shrink-0 items-center border pl-[5px] " + (on ? "border-[#e2e2e2] bg-white text-black " : "border-[#b5b5b5] bg-[#f2f2f2] text-[#999] ") + w}>{children}</div>
);

const Drop = ({ on }) => (
  <div className={"flex h-[21px] w-[14px] shrink-0 items-center justify-center border " + (on ? "border-[#777] bg-linear-to-b from-[#f6f6f6] to-[#dadada]" : "border-[#b9b9b9] bg-[#f2f2f2]")}>
    <Svg w={8} h={5}><path d="M.5 0h7L4 4.500z" fill={on ? "#000" : "#aaa"} /></Svg>
  </div>
);

const Field = () => <div className="h-[20px] w-[33px] shrink-0 rounded-[1px] border border-[#d8d8d8] bg-white" />;
const VLine = () => <div className="mt-[4px] h-[97px] w-px shrink-0 bg-[#a3a3a3]" />;

function Properties() {
  return (
    <div className="flex h-[125px] w-[1206px] shrink-0 flex-col border-x border-t border-[#222] border-x-[#777] bg-[#efefef] text-[11px] leading-none text-black">
      <div className="flex h-[19px] shrink-0 items-center border-b border-[#888] bg-linear-to-b from-black from-60% to-[#3c3c3c] pl-[13px] text-white">
        <Svg w={10} h={7}><path d="M.5 0h9L5 6.500z" fill="#fff" /></Svg>
        <span className="pt-px pl-[4px] text-[11.500px] font-bold tracking-[-0.6px]">Properties</span>
        <Svg w={14} h={11} className="mr-[3px] ml-auto">
          <path d="M1 1.500h2M1 5h2M1 8.500h2M4.500 1.500h6M4.500 5h6M4.500 8.500h5" stroke="#bbb" strokeWidth="1.300" />
          <path d="M9 8h5l-2.500 3z" fill="#bbb" />
        </Svg>
      </div>
      <div className="flex min-h-0 flex-1">
        <div className="flex w-[122px] shrink-0 flex-col pl-[4px]">
          <div className="flex h-[52px] shrink-0 border-b border-[#a3a3a3] pt-[10px]">
            <Svg w={23} h={30}>
              <circle cx="15" cy="15.500" r="6.400" fill="#edf1f4" stroke="#3f4d58" strokeWidth="1.200" />
              <path d="M10.500 17a5 5 0 0 0 9 0z" fill="#c9d3da" />
            </Svg>
            <span className="pt-[2px] pl-[8px] tracking-[-0.3px]">Ellipse tool</span>
          </div>
          <div className="flex items-center pt-[4px]">
            <span className="w-[24px] pl-[7px]">W:</span><Field /><span className="w-6 pl-[9px]">X:</span><Field />
          </div>
          <div className="flex items-center pt-[2px]">
            <span className="w-[24px] pl-[8px]">H:</span><Field /><span className="w-6 pl-[9px]">Y:</span><Field />
          </div>
        </div>
        <VLine />
        <div className="flex w-[184px] shrink-0 flex-col pt-[5px] pl-[4px]">
          <div className="flex h-[21px] items-center">
            <svg width="18" height="18" viewBox="1 1 20 20" className="-ml-px shrink-0">
              <path d="M9 6l8 5.500-6 6.500-6.500-5.500z" fill="#c9cbe2" stroke="#111" strokeWidth="1.200" />
              <path d="M9 9c-1-4 1-7 3-5s2 4 1.500 5.500" stroke="#111" strokeWidth="1.200" fill="none" />
              <path d="M9 6c-4 0-7 2-5.500 11l2.500-5z" fill="#111" />
            </svg>
            <div className="pr-[4px] pl-[3px]"><Swatch color="#000" w={22} /></div>
            <Select w="w-[128px]">Solid</Select>
          </div>
          <div className="mt-[3px] flex h-[21px] items-center">
            <span className="w-[46px] pr-[2px] text-right tracking-[-0.2px]">Edge:</span>
            <Select w="w-[83px]">Anti-Alias</Select>
            <div className="flex gap-px pl-[2px]"><NumBox /><Drop /></div>
          </div>
          <div className="mt-[5px] flex h-[21px] items-center">
            <span className="w-[48px] pr-[4px] text-right tracking-[-0.1px] whitespace-nowrap">Texture:</span>
            <Select w="w-[83px]">Grain</Select>
            <div className="flex gap-px pl-[2px]"><NumBox on /><Drop on /></div>
          </div>
          <div className="mt-[4px] flex items-center pl-[48px] text-[#999]">
            <div className="h-[13px] w-[13px] border border-[#aaa] bg-[#f5f5f5]" />
            <span className="pl-[3px] tracking-[-0.4px]">Transparent</span>
          </div>
        </div>
        <VLine />
        <div className="flex w-[203px] shrink-0 flex-col pt-[5px]">
          <div className="flex h-[21px] items-center pl-[4px]">
            <svg width="17" height="17" viewBox="0 0 22 22" className="shrink-0">
              <path d="M3 19l2-5L15 3l3 2.500L8 17z" fill="#e9e2b0" stroke="#222" strokeWidth="1.500" />
              <path d="M3 19l1.300-3.500L6.500 17.500z" fill="#222" />
            </svg>
            <div className="pr-[4px] pl-[3px]"><Swatch none w={23} /></div>
            <div className="flex gap-px pr-[3px]"><NumBox /><Drop /></div>
            <Select w="w-[96px]">None</Select>
          </div>
          <div className="mt-[3px] flex h-[21px] items-center">
            <span className="w-[125px] pr-[4px] text-right tracking-[-0.2px]">Edge:</span>
            <div className="h-[21px] w-[23px] border-t border-l border-[#aaa] bg-white" />
            <div className="flex gap-px pl-[2px]"><NumBox /><Drop /></div>
          </div>
          <div className="mt-[5px] flex h-[21px] items-center">
            <span className="w-[53px] pr-[4px] text-right tracking-[-0.1px] whitespace-nowrap text-[#aaa]">Texture:</span>
            <Select off w="w-[97px]">Grain</Select>
            <div className="flex gap-px pl-[3px]"><NumBox /><Drop /></div>
          </div>
        </div>
        <VLine />
        <div className="flex h-[26px] shrink-0 items-end pl-[3px]">
          <Svg w={10} h={14} className="mb-[4px]">
            <path d="M.5 .5h9v13h-9z" fill="#fff" stroke="#222" />
            <path d="M1.500 1.500H5V5H1.500zM5 5h3.500v4H5zM1.500 9H5v3.500H1.500z" fill="#aaa" />
          </Svg>
          <div className="flex gap-[2px] pr-[4px] pl-[3px]"><NumBox on w="w-[28px]"><span className="tracking-[-0.5px]">100</span></NumBox><Drop on /></div>
          <Select w="w-[122px]">Normal</Select>
        </div>
        <div className="ml-auto flex flex-col justify-between pt-[5px] pr-[6px] pb-[8px]">
          <Svg w={14} h={14}>
            <circle cx="7" cy="7" r="6" fill="#fff" stroke="#222" />
            <text x="7" y="10.500" fontSize="10" fontWeight="700" textAnchor="middle" fill="#000" fontFamily="Open Sans, sans-serif">?</text>
          </Svg>
          <Svg w={12} h={7} className="ml-[2px]"><path d="M.8 6.300L6 1l5.200 5.300z" fill="#fff" stroke="#111" /></Svg>
        </div>
      </div>
    </div>
  );
}

/* ---------- task bar and the sliver of the window behind ---------- */

const taskTints = ["#6fa8cf", "#4f6077", "#86b81c", "#caa23c", "#e8dc9a", "#f29320", "#8a8a8a", "#a98c52", "#8a8a8a"];

function TaskBar() {
  return (
    <div className="flex h-[8px] w-[1288px] shrink-0 items-end overflow-hidden border-t-2 border-[#4c4c4c] bg-linear-to-b from-[#777] to-[#9a9a9a]">
      <div className="w-[178px] shrink-0">
        <svg width="178" height="6" viewBox="0 0 178 6" className="block">
          <path d="M64 3h10M162 3h10" stroke="#ddd" strokeDasharray="2 2" />
          <path d="M146 5l2-2M149 5l2-2" stroke="#fff" strokeWidth="1.500" />
        </svg>
      </div>
      <div className="flex gap-[4px]">
        {taskTints.map((c, i) => (
          <div key={i} className="flex h-[5px] w-[64px] shrink-0 justify-start rounded-t-[3px] border border-b-0 border-[#444] bg-[#a4a4a4] pl-[12px]">
            <div className="mt-[3px] h-px w-3 opacity-70" style={{ backgroundColor: c }} />
          </div>
        ))}
        <div className="h-[5px] w-[64px] shrink-0 rounded-t-[3px] bg-[#1a1a1a]" />
      </div>
      <svg width="434" height="6" viewBox="854 772 434 6" className="block shrink-0">
        <path d="M869 774h10" stroke="#ddd" strokeDasharray="2 2" />
        <path d="M884 779v-3q0-2 3-2h163q3 0 3 2v3" fill="#999" stroke="#444" />
        <path d="M912 778q3-2 8-2h110q6 0 7 2" fill="none" stroke="#555" />
        <ellipse cx="968" cy="779" rx="8" ry="5" fill="#dfe3ff" stroke="#5a66b8" />
        <path d="M1044 778l3-3 2 3zM1165 778v-3h9v3z" fill="#fff" />
        <path d="M1081 774h4v4h-4z" fill="#f0a060" />
        <path d="M1113 778q4-4 12-3v3z" fill="#e8c820" />
        <path d="M1131 775h13v3h-13z" fill="#4fb3e8" />
        <path d="M1161 774h3v4h-3zM1182 775h8v3h-8z" fill="#223" />
        <path d="M1199 778l4-3v3z" fill="#345" />
      </svg>
    </div>
  );
}

function BehindWindow() {
  return (
    <div className="flex w-2 shrink-0 flex-col border-l border-[#b5b5b5] bg-white">
      <div className="h-[10px] bg-[#e8b92a]" />
      <div className="flex h-[60px] items-end bg-[#f0f0f0]">
        <svg width="7" height="60" viewBox="0 0 7 60">
          <path d="M1 6h5" stroke="#5c5" strokeDasharray="1 1" strokeWidth="2" />
          <path d="M5 38v16" stroke="#aaa" strokeDasharray="2 3" strokeWidth="2" />
        </svg>
      </div>
      <div className="h-[19px] overflow-hidden border-t border-[#999] bg-[#a6bede]">
        <div className="ml-[4px] text-[11px] leading-[17px] font-bold text-[#26324c]">C</div>
      </div>
      <div className="h-[27px] border-b border-[#888] bg-[#ececec]" />
    </div>
  );
}

export default function App() {
  return (
    <div className={"relative flex h-[778px] w-[1288px] flex-col overflow-hidden bg-[#efefef] " + UI}>
      <div className="flex h-[770px] shrink-0">
        <div className="flex w-[1280px] shrink-0 flex-col">
          <TitleBar />
          <MenuBar />
          <div className="flex min-h-0 flex-1">
            <Tools />
            <div className="flex min-w-0 flex-1 bg-linear-to-b from-[#808080] to-[#b6b6b6] pt-[6px] pl-[5px]">
              <div className="flex flex-col gap-[5px]">
                <DocWindow />
                <Properties />
              </div>
              <div className="mt-[334px] ml-auto flex h-[48px] w-[6px] items-center justify-center self-start border border-[#e2e2e2] bg-[#c2c2c2]">
                <Svg w={4} h={6}><path d="M4 0v6L0 3z" fill="#fff" /></Svg>
              </div>
            </div>
          </div>
        </div>
        <BehindWindow />
      </div>
      <TaskBar />
      <svg width="37" height="13" viewBox="0 0 37 13" className="absolute bottom-0 left-[12px]">
        <ellipse cx="18" cy="16" rx="17.500" ry="15.500" fill="#4a6a80" stroke="#2c3c48" />
        <ellipse cx="18" cy="6" rx="12" ry="4.500" fill="#b9d0de" opacity=".7" />
        <path d="M12 9q4-3 7-1v5h-8z" fill="#e25822" />
        <path d="M20 8q3 1 6-1l-1 6h-5z" fill="#7fb63c" />
      </svg>
      <Bubbles />
    </div>
  );
}
